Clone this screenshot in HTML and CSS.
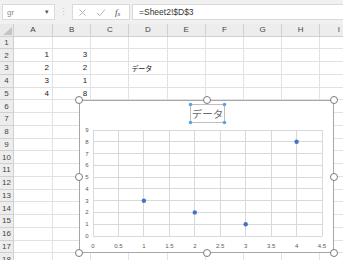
FILE: index.html
```html
<!DOCTYPE html>
<html lang="ja">
<head>
    <meta charset="UTF-8">
    <meta name="viewport" content="width=device-width, initial-scale=1.0">
    <title>Sheet</title>
    <link rel="stylesheet" href="styles.css">
</head>
<body>
    <div class="app">
        <div class="formula-bar">
            <div class="name-box">
                <span class="name">gr</span>
                <span class="drop">&#9662;</span>
            </div>
            <div class="grip">&#8942;</div>
            <div class="fx-box">
                <svg class="tool" width="9" height="9" viewBox="0 0 9 9"><path d="M1.5 1.5 L7.5 7.5 M7.5 1.5 L1.5 7.5" stroke="#b4b4b4" stroke-width="1" fill="none"/></svg>
                <svg class="tool" width="10" height="9" viewBox="0 0 10 9"><path d="M1 5 L3.8 7.6 L9 1.4" stroke="#b4b4b4" stroke-width="1" fill="none"/></svg>
                <span class="fx">f<sub>x</sub></span>
            </div>
            <div class="formula-input">=Sheet2!$D$3</div>
        </div>

        <div class="sheet">
            <div class="corner"></div><div class="col">A</div><div class="col">B</div><div class="col">C</div><div class="col">D</div><div class="col">E</div><div class="col">F</div><div class="col">G</div><div class="col">H</div><div class="col">I</div>
            <div class="row">1</div><div class="cell"></div><div class="cell"></div><div class="cell"></div><div class="cell"></div><div class="cell"></div><div class="cell"></div><div class="cell"></div><div class="cell"></div><div class="cell"></div>
            <div class="row">2</div><div class="cell num">1</div><div class="cell num">3</div><div class="cell"></div><div class="cell"></div><div class="cell"></div><div class="cell"></div><div class="cell"></div><div class="cell"></div><div class="cell"></div>
            <div class="row">3</div><div class="cell num">2</div><div class="cell num">2</div><div class="cell"></div><div class="cell txt">データ</div><div class="cell"></div><div class="cell"></div><div class="cell"></div><div class="cell"></div><div class="cell"></div>
            <div class="row">4</div><div class="cell num">3</div><div class="cell num">1</div><div class="cell"></div><div class="cell"></div><div class="cell"></div><div class="cell"></div><div class="cell"></div><div class="cell"></div><div class="cell"></div>
            <div class="row">5</div><div class="cell num">4</div><div class="cell num">8</div><div class="cell"></div><div class="cell"></div><div class="cell"></div><div class="cell"></div><div class="cell"></div><div class="cell"></div><div class="cell"></div>
            <div class="row">6</div><div class="cell"></div><div class="cell"></div><div class="cell"></div><div class="cell"></div><div class="cell"></div><div class="cell"></div><div class="cell"></div><div class="cell"></div><div class="cell"></div>
            <div class="row">7</div><div class="cell"></div><div class="cell"></div><div class="cell"></div><div class="cell"></div><div class="cell"></div><div class="cell"></div><div class="cell"></div><div class="cell"></div><div class="cell"></div>
            <div class="row">8</div><div class="cell"></div><div class="cell"></div><div class="cell"></div><div class="cell"></div><div class="cell"></div><div class="cell"></div><div class="cell"></div><div class="cell"></div><div class="cell"></div>
            <div class="row">9</div><div class="cell"></div><div class="cell"></div><div class="cell"></div><div class="cell"></div><div class="cell"></div><div class="cell"></div><div class="cell"></div><div class="cell"></div><div class="cell"></div>
            <div class="row">10</div><div class="cell"></div><div class="cell"></div><div class="cell"></div><div class="cell"></div><div class="cell"></div><div class="cell"></div><div class="cell"></div><div class="cell"></div><div class="cell"></div>
            <div class="row">11</div><div class="cell"></div><div class="cell"></div><div class="cell"></div><div class="cell"></div><div class="cell"></div><div class="cell"></div><div class="cell"></div><div class="cell"></div><div class="cell"></div>
            <div class="row">12</div><div class="cell"></div><div class="cell"></div><div class="cell"></div><div class="cell"></div><div class="cell"></div><div class="cell"></div><div class="cell"></div><div class="cell"></div><div class="cell"></div>
            <div class="row">13</div><div class="cell"></div><div class="cell"></div><div class="cell"></div><div class="cell"></div><div class="cell"></div><div class="cell"></div><div class="cell"></div><div class="cell"></div><div class="cell"></div>
            <div class="row">14</div><div class="cell"></div><div class="cell"></div><div class="cell"></div><div class="cell"></div><div class="cell"></div><div class="cell"></div><div class="cell"></div><div class="cell"></div><div class="cell"></div>
            <div class="row">15</div><div class="cell"></div><div class="cell"></div><div class="cell"></div><div class="cell"></div><div class="cell"></div><div class="cell"></div><div class="cell"></div><div class="cell"></div><div class="cell"></div>
            <div class="row">16</div><div class="cell"></div><div class="cell"></div><div class="cell"></div><div class="cell"></div><div class="cell"></div><div class="cell"></div><div class="cell"></div><div class="cell"></div><div class="cell"></div>
            <div class="row">17</div><div class="cell"></div><div class="cell"></div><div class="cell"></div><div class="cell"></div><div class="cell"></div><div class="cell"></div><div class="cell"></div><div class="cell"></div><div class="cell"></div>
            <div class="row">18</div><div class="cell"></div><div class="cell"></div><div class="cell"></div><div class="cell"></div><div class="cell"></div><div class="cell"></div><div class="cell"></div><div class="cell"></div><div class="cell"></div>
        </div>

        <!-- floating scatter chart -->
        <div class="chart">
            <svg width="255" height="153" viewBox="0 0 255 153">
                <rect x="0.5" y="0.5" width="254" height="152" fill="#fff" stroke="#a6a6a6"/>

                <g stroke="#d9d9d9" stroke-width="1" shape-rendering="crispEdges">
                    <line x1="14" y1="30" x2="243" y2="30"/>
                    <line x1="14" y1="41.8" x2="243" y2="41.8"/>
                    <line x1="14" y1="53.6" x2="243" y2="53.6"/>
                    <line x1="14" y1="65.3" x2="243" y2="65.3"/>
                    <line x1="14" y1="77.1" x2="243" y2="77.1"/>
                    <line x1="14" y1="88.9" x2="243" y2="88.9"/>
                    <line x1="14" y1="100.7" x2="243" y2="100.7"/>
                    <line x1="14" y1="112.4" x2="243" y2="112.4"/>
                    <line x1="14" y1="124.2" x2="243" y2="124.2"/>
                    <line x1="14" y1="136" x2="243" y2="136"/>
                    <line x1="14" y1="30" x2="14" y2="136"/>
                    <line x1="39.4" y1="30" x2="39.4" y2="136"/>
                    <line x1="64.9" y1="30" x2="64.9" y2="136"/>
                    <line x1="90.3" y1="30" x2="90.3" y2="136"/>
                    <line x1="115.8" y1="30" x2="115.8" y2="136"/>
                    <line x1="141.2" y1="30" x2="141.2" y2="136"/>
                    <line x1="166.7" y1="30" x2="166.7" y2="136"/>
                    <line x1="192.1" y1="30" x2="192.1" y2="136"/>
                    <line x1="217.6" y1="30" x2="217.6" y2="136"/>
                    <line x1="243" y1="30" x2="243" y2="136"/>
                </g>

                <g class="axis-label" text-anchor="end">
                    <text x="9.5" y="32">9</text>
                    <text x="9.5" y="43.8">8</text>
                    <text x="9.5" y="55.6">7</text>
                    <text x="9.5" y="67.3">6</text>
                    <text x="9.5" y="79.1">5</text>
                    <text x="9.5" y="90.9">4</text>
                    <text x="9.5" y="102.7">3</text>
                    <text x="9.5" y="114.4">2</text>
                    <text x="9.5" y="126.2">1</text>
                    <text x="9.5" y="138">0</text>
                </g>
                <g class="axis-label" text-anchor="middle">
                    <text x="14" y="147.5">0</text>
                    <text x="39.4" y="147.5">0.5</text>
                    <text x="64.9" y="147.5">1</text>
                    <text x="90.3" y="147.5">1.5</text>
                    <text x="115.8" y="147.5">2</text>
                    <text x="141.2" y="147.5">2.5</text>
                    <text x="166.7" y="147.5">3</text>
                    <text x="192.1" y="147.5">3.5</text>
                    <text x="217.6" y="147.5">4</text>
                    <text x="243" y="147.5">4.5</text>
                </g>

                <g fill="#4472c4">
                    <circle cx="64.9" cy="100.7" r="2.2"/>
                    <circle cx="115.8" cy="112.4" r="2.2"/>
                    <circle cx="166.7" cy="124.2" r="2.2"/>
                    <circle cx="217.6" cy="41.8" r="2.2"/>
                </g>

                <!-- selected title -->
                <rect x="111.5" y="4.5" width="34" height="18" fill="none" stroke="#bfbfbf"/>
                <text class="chart-title" x="128.5" y="17.5" text-anchor="middle">データ</text>
                <g fill="#5ba3e6">
                    <circle cx="111.5" cy="4.5" r="1.8"/>
                    <circle cx="145.5" cy="4.5" r="1.8"/>
                    <circle cx="111.5" cy="22.5" r="1.8"/>
                    <circle cx="145.5" cy="22.5" r="1.8"/>
                </g>
            </svg>
            <span class="handle tl"></span>
            <span class="handle tm"></span>
            <span class="handle tr"></span>
            <span class="handle ml"></span>
            <span class="handle mr"></span>
            <span class="handle bl"></span>
            <span class="handle bm"></span>
            <span class="handle br"></span>
        </div>
    </div>
</body>
</html>
```

FILE: styles.css
```css
body {
    margin: 0;
    padding: 0;
    font-family: "Liberation Sans", "Noto Sans CJK JP", sans-serif;
    background-color: #fff;
    color: #333;
    overflow: hidden;
}

.app {
    position: relative;
    width: 343px;
    height: 260px;
    overflow: hidden;
}

.formula-bar {
    display: flex;
    align-items: center;
    height: 24px;
    padding: 0 0 0 2px;
    background-color: #f1f1f1;
    box-sizing: border-box;
}

.name-box {
    display: flex;
    align-items: center;
    justify-content: space-between;
    width: 53px;
    height: 16px;
    padding: 0 5px 0 4px;
    box-sizing: border-box;
    background-color: #fff;
    border: 1px solid #dadada;
}

.name {
    font-size: 8px;
    color: #8a8a8a;
}

.drop {
    font-size: 7px;
    color: #555;
}

.grip {
    width: 17px;
    text-align: center;
    font-size: 9px;
    color: #c2c2c2;
}

.fx-box {
    display: flex;
    align-items: center;
    width: 58px;
    height: 16px;
    padding-left: 5px;
    box-sizing: border-box;
    background-color: #fff;
    border: 1px solid #dadada;
}

.tool {
    margin-right: 9px;
}

.fx {
    font-family: "Liberation Serif", serif;
    font-style: italic;
    font-size: 9px;
    color: #444;
}

.fx sub {
    font-size: 6px;
    vertical-align: -1px;
}

.formula-input {
    flex: 1;
    height: 16px;
    margin-left: 2px;
    padding-left: 6px;
    box-sizing: border-box;
    background-color: #fff;
    border: 1px solid #dadada;
    border-right: none;
    font-size: 8.5px;
    line-height: 14px;
    color: #333;
}

.sheet {
    display: grid;
    grid-template-columns: 14px 39px repeat(8, 38.2px);
    grid-template-rows: 12.5px repeat(18, 12.75px);
    font-size: 8px;
}

.corner {
    position: relative;
    background-color: #e9e9e9;
    border-right: 1px solid #cfcfcf;
    border-bottom: 1px solid #cfcfcf;
}

.corner::after {
    content: "";
    position: absolute;
    right: 1px;
    bottom: 1px;
    border-left: 9px solid transparent;
    border-bottom: 8px solid #c4c4c4;
}

.col, .row {
    display: flex;
    align-items: center;
    justify-content: center;
    background-color: #ededed;
    color: #444;
    border-right: 1px solid #d0d0d0;
    border-bottom: 1px solid #d0d0d0;
    box-sizing: border-box;
}

.row {
    font-size: 8px;
}

.cell {
    border-right: 1px solid #e2e2e2;
    border-bottom: 1px solid #e2e2e2;
    box-sizing: border-box;
    line-height: 12px;
    color: #222;
    overflow: visible;
    white-space: nowrap;
}

.num {
    text-align: right;
    padding-right: 3px;
}

.txt {
    font-family: "Noto Sans CJK JP", sans-serif;
    font-size: 7px;
    padding-left: 2px;
}

.chart {
    position: absolute;
    left: 79px;
    top: 100px;
    width: 255px;
    height: 153px;
}

.chart svg {
    display: block;
    overflow: visible;
}

.axis-label {
    font-family: "Liberation Sans", sans-serif;
    font-size: 6px;
    fill: #595959;
}

.chart-title {
    font-family: "Noto Sans CJK JP", sans-serif;
    font-size: 10.5px;
    fill: #6b6b6b;
}

.handle {
    position: absolute;
    width: 6px;
    height: 6px;
    margin: -4px 0 0 -4px;
    border: 1px solid #7a7a7a;
    border-radius: 50%;
    background-color: #fff;
}

.tl { left: 0; top: 0; }
.tm { left: 50%; top: 0; }
.tr { left: 100%; top: 0; }
.ml { left: 0; top: 50%; }
.mr { left: 100%; top: 50%; }
.bl { left: 0; top: 100%; }
.bm { left: 50%; top: 100%; }
.br { left: 100%; top: 100%; }
```
